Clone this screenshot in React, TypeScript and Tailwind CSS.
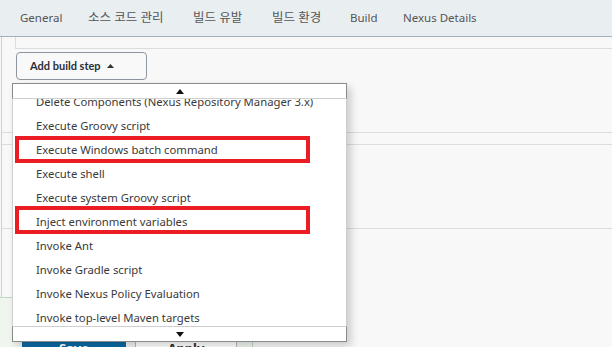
import React from "react";

const items = [
  "Delete Components (Nexus Repository Manager 3.x)",
  "Execute Groovy script",
  "Execute Windows batch command",
  "Execute shell",
  "Execute system Groovy script",
  "Inject environment variables",
  "Invoke Ant",
  "Invoke Gradle script",
  "Invoke Nexus Policy Evaluation",
  "Invoke top-level Maven targets",
];

const tabs: { t: string; w: string; ko?: boolean }[] = [
  { t: "General", w: "w-[68px]" },
  { t: "소스 코드 관리", w: "w-[105px]", ko: true },
  { t: "빌드 유발", w: "w-[79px]", ko: true },
  { t: "빌드 환경", w: "w-[78px]", ko: true },
  { t: "Build", w: "w-[53px]" },
  { t: "Nexus Details", w: "w-[90px]" },
];

function Tri({ up }: { up?: boolean }) {
  return (
    <svg width="8" height="5" viewBox="0 0 8 5">
      {up ? <polygon points="0,5 8,5 4,0" fill="#111" /> : <polygon points="0,0 8,0 4,5" fill="#111" />}
    </svg>
  );
}

export default function App() {
  return (
    <div
      className="relative w-[612px] h-[347px] overflow-hidden bg-[#f8f8f8] text-[#333]"
      style={{ fontFamily: '"Noto Sans", "Noto Sans CJK KR", sans-serif' }}
    >
      {/* tab bar */}
      <div className="h-[37px] bg-[#e9eef1] border-b border-[#a3afba] flex items-center pl-[20px] text-[#555]">
        {tabs.map((tab) => (
          <span
            key={tab.t}
            className={`${tab.w} leading-none whitespace-nowrap ${tab.ko ? "text-[12.5px]" : "text-[11.5px]"}`}
          >
            {tab.t}
          </span>
        ))}
      </div>

      {/* body */}
      <div className="ml-[1px] border-l border-[#cfcfcf] h-[310px] flex flex-col">
        <div className="h-[12px] ml-[13px] border-l border-b border-[#dcdcdc] bg-[#f8f8f8]" />
        <div className="pl-[14px] pt-[3px]">
          <div
            className="w-[131px] h-[28px] rounded-[4px] border-[1.5px] border-[#8f959c] bg-[#f9f9f9] flex items-center pl-[13px] gap-[6px] text-[11px] font-bold text-[#2a2f3a]"
            style={{ fontFamily: 'Lato, "Noto Sans", sans-serif' }}
          >
            <span>Add build step</span>
            <svg width="7" height="4" viewBox="0 0 7 4"><polygon points="0,4 7,4 3.5,0" fill="#333" /></svg>
          </div>
        </div>
        <div className="h-[53px] border-b border-[#dcdcdc]" />
        <div className="h-[12px] border-b border-[#dcdcdc]" />
        <div className="h-[84px] border-b border-[#dcdcdc]" />
        <div className="h-[64px]" />
      </div>

      {/* bottom action bar */}
      <div className="absolute left-0 top-[297px] w-[253px] h-[60px] bg-[#f0f5f0] border-t border-r border-[#bcd8c0] flex items-start pl-[22px] pt-[36px] gap-[9px] text-[13px]">
        <div className="w-[104px] h-[30px] bg-[#0b6aa2] text-white flex items-center justify-center font-bold">Save</div>
        <div className="w-[102px] h-[30px] bg-white border border-[#b5b5b5] flex items-center justify-center font-bold text-[#333]">Apply</div>
      </div>

      {/* dropdown menu */}
      <div className="absolute left-[12px] top-[83px] w-[335px] h-[259px] flex flex-col bg-white shadow-[4px_4px_8px_rgba(0,0,0,0.18)]">
        <div className="h-[16px] border border-[#8a8a8a] border-b-[#cfcfcf] flex items-center justify-center">
          <Tri up />
        </div>
        <div className="flex-1 overflow-hidden border-l border-r border-[#cfcfcf]">
          <div className="-mt-[9px] flex flex-col">
            {items.map((t) => (
              <div key={t} className="h-[24px] flex items-center pl-[23px] text-[11.3px] text-[#3a3a3a] whitespace-nowrap">
                {t}
              </div>
            ))}
          </div>
        </div>
        <div className="h-[16px] border border-[#8a8a8a] border-t-[#cfcfcf] flex items-center justify-center">
          <Tri />
        </div>
      </div>

      {/* red annotation boxes */}
      <div className="absolute left-[15px] top-[136px] w-[295px] h-[27px] border-[4px] border-[#ec1c24]" />
      <div className="absolute left-[15px] top-[206px] w-[295px] h-[28px] border-[4px] border-[#ec1c24]" />
    </div>
  );
}
